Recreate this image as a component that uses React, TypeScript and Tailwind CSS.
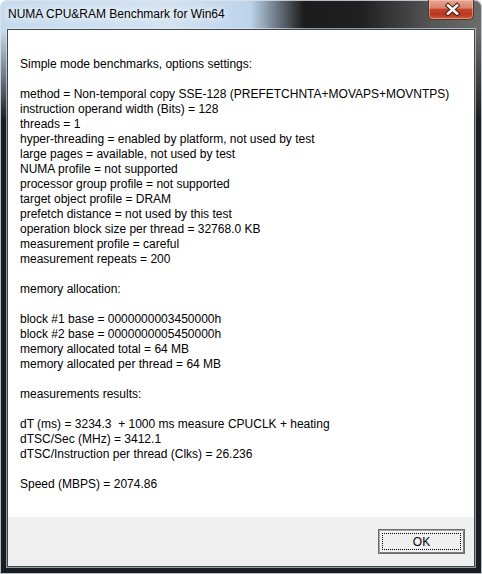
import React from 'react';

const lines = [
    'Simple mode benchmarks, options settings:',
    '',
    'method = Non-temporal copy SSE-128 (PREFETCHNTA+MOVAPS+MOVNTPS)',
    'instruction operand width (Bits) = 128',
    'threads = 1',
    'hyper-threading = enabled by platform, not used by test',
    'large pages = available, not used by test',
    'NUMA profile = not supported',
    'processor group profile = not supported',
    'target object profile = DRAM',
    'prefetch distance = not used by this test',
    'operation block size per thread = 32768.0 KB',
    'measurement profile = careful',
    'measurement repeats = 200',
    '',
    'memory allocation:',
    '',
    'block #1 base = 0000000003450000h',
    'block #2 base = 0000000005450000h',
    'memory allocated total = 64 MB',
    'memory allocated per thread = 64 MB',
    '',
    'measurements results:',
    '',
    'dT (ms) = 3234.3  + 1000 ms measure CPUCLK + heating',
    'dTSC/Sec (MHz) = 3412.1',
    'dTSC/Instruction per thread (Clks) = 26.236',
    '',
    'Speed (MBPS) = 2074.86'
];

const CloseButton = () => (
    <div className="relative h-[20px] w-[46px] self-start overflow-hidden rounded-b-[5px] border border-t-0 border-[#4b3630] bg-[linear-gradient(180deg,#e6a595_0%,#d9836c_42%,#c4432a_50%,#bd3720_78%,#d0603c_100%)] shadow-[inset_0_0_0_1px_rgba(255,220,200,0.45)]">
        <svg width="46" height="20" viewBox="0 0 46 20" className="absolute left-0 top-0">
            <path d="M19 5.5 L28 13.5 M28 5.5 L19 13.5" stroke="#4a1e14" strokeWidth="4.6" strokeLinecap="square" />
            <path d="M19 5.5 L28 13.5 M28 5.5 L19 13.5" stroke="#ffffff" strokeWidth="2.6" strokeLinecap="square" />
        </svg>
    </div>
);

export default function App() {
    return (
        <div className="flex h-[574px] w-[482px] flex-col rounded-t-[7px] bg-[linear-gradient(180deg,rgba(24,27,30,0)_30px,#1b1e21_120px),linear-gradient(90deg,#c6daee_0%,#d3e3f2_35%,#bcd3ea_52%,#1c1c1c_63%,#202020_75%,#575757_90%,#6c6c6c_100%)] shadow-[inset_0_0_0_1px_rgba(220,228,236,0.8)] font-['Liberation_Sans',Arial,sans-serif] text-black">
            <div className="flex h-[29px] items-center justify-between pl-[8px] pr-[8px]">
                <span className="text-[12px] leading-[15px] [text-shadow:0_0_6px_#fff,0_0_10px_#fff]">
                    NUMA CPU&amp;RAM Benchmark for Win64
                </span>
                <CloseButton />
            </div>

            <div className="flex flex-1 flex-col px-[7px] pb-[7px]">
                <div className="flex flex-1 flex-col border border-[#3c4650] shadow-[0_0_0_1px_rgba(230,236,242,0.6)]">
                    <div className="h-[487px] bg-white pl-[12px] pt-[27px] text-[12px]">
                        {lines.map((line, i) => (
                            <div key={i} className="h-[15px] whitespace-pre leading-[15px]">
                                {line}
                            </div>
                        ))}
                    </div>

                    <div className="flex flex-1 items-center justify-end bg-[#f0f0f0] pr-[9px]">
                        <button
                            type="button"
                            className="flex h-[25px] w-[87px] items-center justify-center border border-[#6a6a6a] bg-[#f0f0f0] p-[3px] shadow-[inset_1px_1px_0_#a8a8a8,inset_-1px_-1px_0_#7a7a7a]">
                            <span className="flex h-full w-full items-center justify-center border border-dotted border-black text-[12px] leading-none">
                                OK
                            </span>
                        </button>
                    </div>
                </div>
            </div>
        </div>
    );
}
